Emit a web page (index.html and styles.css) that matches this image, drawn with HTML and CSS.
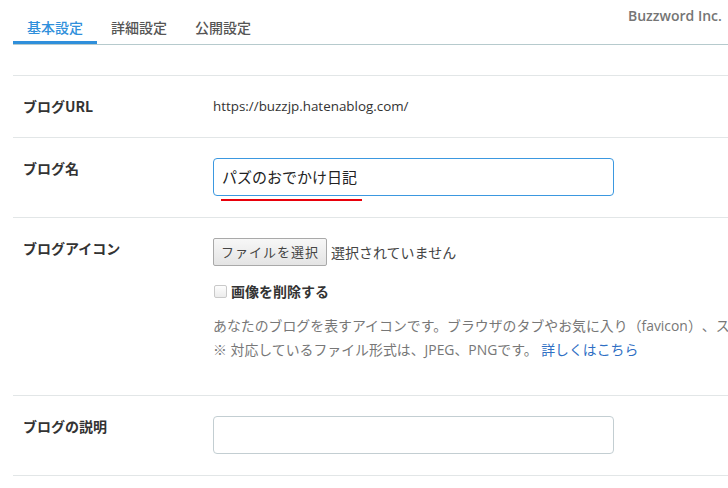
FILE: index.html
```html
<!DOCTYPE html>
<html lang="ja">
<head>
<meta charset="utf-8">
<title>ブログ設定</title>
<link rel="stylesheet" href="styles.css">
</head>
<body>
<div class="page">
  <div class="brand">Buzzword Inc.</div>
  <ul class="tabs">
    <li class="tab active">基本設定</li>
    <li class="tab">詳細設定</li>
    <li class="tab">公開設定</li>
  </ul>
  <div class="rows">
    <div class="row">
      <div class="label">ブログURL</div>
      <div class="field"><div class="url">https://buzzjp.hatenablog.com/</div></div>
    </div>
    <div class="row">
      <div class="label">ブログ名</div>
      <div class="field">
        <div class="input focus">パズのおでかけ日記</div>
        <div class="mark"></div>
      </div>
    </div>
    <div class="row">
      <div class="label">ブログアイコン</div>
      <div class="field">
        <div class="file">
          <span class="file-btn">ファイルを選択</span>
          <span class="file-none">選択されていません</span>
        </div>
        <div class="check">
          <span class="box"></span>
          <span class="check-label">画像を削除する</span>
        </div>
        <div class="desc">
          <p>あなたのブログを表すアイコンです。ブラウザのタブやお気に入り（favicon）、スマートフォンのホーム画面などで使われます。</p>
          <p>※ 対応しているファイル形式は、JPEG、PNGです。 <a class="link">詳しくはこちら</a></p>
        </div>
      </div>
    </div>
    <div class="row">
      <div class="label">ブログの説明</div>
      <div class="field"><div class="input"></div></div>
    </div>
  </div>
</div>
</body>
</html>
```

FILE: styles.css
```css
html, body {
  margin: 0;
  padding: 0;
  overflow: hidden;
  background: #fff;
}
body {
  font-family: "Open Sans", "Noto Sans CJK JP", sans-serif;
  color: #333;
}
.page {
  position: relative;
  width: 1100px;
  padding-left: 13px;
}
.brand {
  position: absolute;
  left: 628px;
  top: 6px;
  font-family: "Open Sans", sans-serif;
  font-size: 14px;
  font-weight: 600;
  line-height: 20px;
  color: #757575;
}
.tabs {
  list-style: none;
  margin: 0;
  padding: 0;
  display: flex;
  border-bottom: 1px solid #b6cacd;
}
.tab {
  padding: 17px 14px 4px;
  font-family: "Noto Sans CJK JP", sans-serif;
  font-size: 14px;
  line-height: 20px;
  font-weight: 500;
  color: #555;
  border-bottom: 3px solid transparent;
}
.tab.active {
  color: #2f8fdb;
  border-bottom-color: #2f8fdb;
}
.rows {
  margin-top: 30px;
  border-top: 1px solid #e2e6e7;
}
.row {
  display: flex;
  padding: 20px 0 21px;
  border-bottom: 1px solid #e2e6e7;
}
.label {
  width: 200px;
  padding-left: 10px;
  box-sizing: border-box;
  flex: none;
  font-family: "Noto Sans CJK JP", sans-serif;
  font-size: 14px;
  font-weight: 700;
  line-height: 20px;
  color: #333;
}
.field {
  position: relative;
  flex: 1;
}
.url {
  font-size: 13.4px;
  line-height: 20px;
  color: #333;
}
.input {
  width: 401px;
  height: 38px;
  box-sizing: border-box;
  border: 1px solid #c3ced2;
  border-radius: 4px;
  padding: 0 8px;
  font-family: "Noto Sans CJK JP", sans-serif;
  font-size: 15px;
  line-height: 36px;
  color: #222;
}
.input.focus {
  border-color: #3b98e0;
}
.mark {
  position: absolute;
  left: 8px;
  top: 41px;
  width: 141px;
  height: 2px;
  background: #e8000b;
}
.file {
  display: flex;
  align-items: center;
  gap: 4px;
  height: 28px;
}
.file-btn {
  display: block;
  width: 114px;
  height: 28px;
  box-sizing: border-box;
  border: 1px solid #a9a9a9;
  border-radius: 2px;
  background: linear-gradient(#f7f7f7, #e4e4e4);
  font-family: "Noto Sans CJK JP", sans-serif;
  font-size: 13px;
  letter-spacing: 1px;
  line-height: 26px;
  text-align: center;
  color: #444;
}
.file-none {
  font-family: "Noto Sans CJK JP", sans-serif;
  font-size: 14px;
  line-height: 20px;
  color: #444;
}
.check {
  display: flex;
  align-items: center;
  gap: 4px;
  margin-top: 15px;
  height: 20px;
}
.box {
  display: block;
  width: 11px;
  height: 11px;
  margin-left: 1px;
  border: 1px solid #c9c9c9;
  border-radius: 2px;
  background: linear-gradient(#fdfdfd, #ececec);
}
.check-label {
  font-family: "Noto Sans CJK JP", sans-serif;
  font-size: 14px;
  font-weight: 700;
  line-height: 20px;
  color: #333;
}
.desc {
  margin-top: 13px;
  margin-bottom: 12px;
  font-size: 13.9px;
  line-height: 24px;
  color: #777;
  text-spacing-trim: space-all;
}
.desc p {
  margin: 0;
  white-space: nowrap;
}
.link {
  color: #2f6fc4;
  text-decoration: none;
}
```
